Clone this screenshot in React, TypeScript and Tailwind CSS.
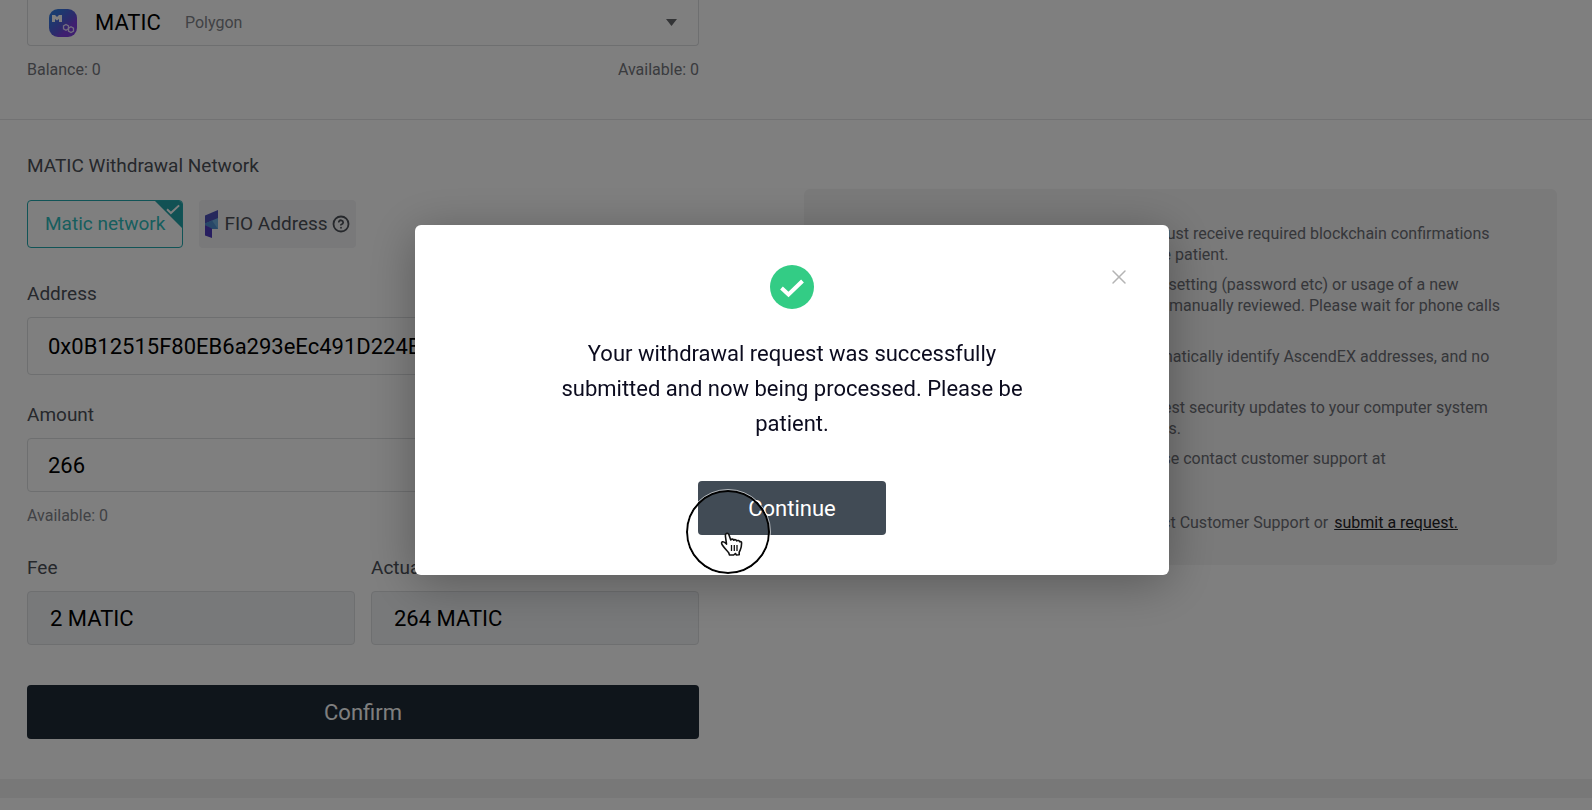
import { CircleQuestionMark, X } from "lucide-react";

const notes = [
  [
    "To be credited to your account, a withdrawal must receive required blockchain confirmations",
    "on the network. It might take time, so please be patient.",
  ],
  [
    "For security of your account any change of the setting (password etc) or usage of a new",
    "withdrawal address may cause a request to be manually reviewed. Please wait for phone calls",
    "or emails from us.",
  ],
  [
    "For all internal transfers of funds, we will automatically identify AscendEX addresses, and no",
    "network fee is charged.",
  ],
  [
    "For your safety, please always install all the latest security updates to your computer system",
    "or browser, and do not open any suspicious files.",
  ],
  [
    "If you have any other questions or issues, please contact customer support at",
    "support@ascendex.com",
  ],
];

const CoinIcon = () => (
  <svg className="size-7 shrink-0" viewBox="0 0 28 28" aria-hidden="true">
    <defs>
      <linearGradient id="coin" x1="0" y1="0" x2="1" y2="1">
        <stop offset="0.2" stopColor="#3478e0" />
        <stop offset="0.55" stopColor="#5a55d8" />
        <stop offset="0.7" stopColor="#7f3fe0" />
      </linearGradient>
    </defs>
    <rect width="28" height="28" rx="9" fill="url(#coin)" />
    <path d="M3 6h3l2 2 2-2h3v7h-3v-3l-2 1.500-2-1.500v3H3z" fill="#fff" />
    <g fill="none" stroke="#e4dcff" strokeWidth="1.300">
      <path d="M17 15.500l2.500 1.400v2.900L17 21.200l-2.500-1.400v-2.900z" />
      <path d="M22 17.800l2.500 1.400v2.900L22 23.500l-2.500-1.400v-2.900z" />
    </g>
  </svg>
);

const FioIcon = () => (
  <svg className="h-7 w-[13px] shrink-0" viewBox="0 0 13 28" aria-hidden="true">
    <path d="M0 8l13-1v12H7l-7-4z" fill="#6fb0e0" />
    <path d="M0 5.500L13 0v8L0 13.500z" fill="#4c50b8" />
    <path d="M0 13.500L7 10.500l6 8.500H7l-7-4z" fill="#4f8fd0" />
    <path d="M0 15l7 3.500V28l-7-2.500z" fill="#4f3cc0" />
  </svg>
);

const HandPointer = () => (
  <svg className="h-[25px] w-6" viewBox="0 0 24 25" aria-hidden="true">
    <path
      d="M6.500 1.500c1-.4 2 .1 2.400 1.200L10.800 8c.5-1.300 2.600-1.200 3 .2.700-.9 2.500-.7 2.900.7.900-.8 2.700-.3 3 .900.900-.5 1.900 0 1.900 1.300 0 2.500-.4 5-1.500 7.200l-.9 1.800v2.600l-2.800.3-1-1.500-1.700 1.500H9.500l-.8-2.200C7 18.500 4.700 16.600 2.500 13.300c-1.200-1.800-1.300-3 0-3.500 1.200-.4 2.700.8 4 2.300L5.400 4c-.2-1.200.2-2.100 1.100-2.500z"
      fill="#fff"
      stroke="#111"
      strokeWidth="1.600"
      strokeLinejoin="round"
    />
    <path d="M11.500 13v6M14.300 13v6M17 13v6" stroke="#111" strokeWidth="1.300" />
  </svg>
);

const WithdrawForm = () => (
  <form className="min-w-0 pt-8" onSubmit={(e) => e.preventDefault()}>
    <fieldset>
      <legend className="text-[19px] leading-7 text-[#4c5058]">
        MATIC Withdrawal Network
      </legend>
      <div className="mt-5 flex gap-4 text-[19px]">
        <label className="relative flex h-12 items-center overflow-hidden rounded-sm border border-[#22a9ae] px-[17px] text-[#2fbcbd]">
          <input type="radio" name="network" className="sr-only" defaultChecked />
          Matic network
          <svg className="absolute top-0 right-0 size-[27px]" viewBox="0 0 28 28" aria-hidden="true">
            <path d="M0 0h28v28z" fill="#22a3a8" />
            <path d="M12.500 8.500l4 4L25 4.500" fill="none" stroke="#fff" strokeWidth="2" />
          </svg>
        </label>
        <label className="flex h-12 items-center gap-1.5 rounded-sm bg-[#f3f3f4] px-1.5 text-[#4c5058]">
          <input type="radio" name="network" className="sr-only" />
          <FioIcon />
          <span className="flex items-center gap-1">
            FIO Address <CircleQuestionMark className="size-[18px]" strokeWidth={2.4} />
          </span>
        </label>
      </div>
    </fieldset>

    <label htmlFor="address" className="mt-8 block text-[19px] leading-7 text-[#4c5058]">
      Address
    </label>
    <input
      id="address"
      className="mt-[9px] h-[58px] w-full rounded-sm border border-[#dcdee0] bg-white px-5 text-[22px] text-black"
      defaultValue="0x0B12515F80EB6a293eEc491D224Bd8fA02C6aE13"
    />

    <label htmlFor="amount" className="mt-[26px] block text-[19px] leading-7 text-[#4c5058]">
      Amount
    </label>
    <input
      id="amount"
      className="mt-[9px] h-[54px] w-full rounded-sm border border-[#dcdee0] bg-white px-5 text-[22px] text-black"
      defaultValue="266"
    />
    <p className="mt-2.5 text-base leading-7 text-[#82848a]">Available: 0</p>

    <div className="mt-6 grid grid-cols-2 gap-4">
      <div>
        <label htmlFor="fee" className="block text-[19px] leading-7 text-[#4c5058]">
          Fee
        </label>
        <input
          id="fee"
          readOnly
          className="mt-[9px] h-[54px] w-full rounded-sm border border-[#dcdee0] bg-[#f0f2f5] px-[22px] text-[22px] text-black"
          defaultValue="2 MATIC"
        />
      </div>
      <div>
        <label htmlFor="actual" className="block text-[19px] leading-7 text-[#4c5058]">
          Actual
        </label>
        <input
          id="actual"
          readOnly
          className="mt-[9px] h-[54px] w-full rounded-sm border border-[#dcdee0] bg-[#f0f2f5] px-[22px] text-[22px] text-black"
          defaultValue="264 MATIC"
        />
      </div>
    </div>

    <button
      type="submit"
      className="mt-10 h-[54px] w-full rounded-sm bg-[#1e2a36] text-[22px] text-white"
    >
      Confirm
    </button>
  </form>
);

const Notes = () => (
  <aside className="mt-[69px] min-w-0 self-start rounded-md bg-[#f4f4f4] pt-[34px] pb-8 pl-8 text-base leading-[21px] whitespace-nowrap text-[#6c6e74]">
    <ul className="space-y-[9px]">
      {notes.map((lines) => (
        <li key={lines[0]}>
          {lines.map((line) => (
            <span key={line} className="block">
              {line}
            </span>
          ))}
        </li>
      ))}
    </ul>
    <p className="mt-[22px]">
      If you still need any help, you might also contact Customer Support or{" "}
      <a href="#request" className="ml-0.5 text-[#1f2226] underline">
        submit a request.
      </a>
    </p>
  </aside>
);

const SuccessDialog = () => (
  <div className="fixed inset-0 flex items-center justify-center bg-black/50 pr-2 pb-2.5">
    <div
      role="dialog"
      aria-modal="true"
      aria-labelledby="message"
      className="relative flex w-[754px] flex-col items-center rounded-md bg-white pt-10 pb-10 shadow-[0_8px_48px_rgba(0,0,0,0.3)]"
    >
      <button aria-label="Close" className="absolute top-10 right-[38px] text-[#b4b4b4]">
        <X className="size-6" strokeWidth={1.5} />
      </button>
      <svg className="size-11" viewBox="0 0 44 44" aria-hidden="true">
        <circle cx="22" cy="22" r="22" fill="#33cc85" />
        <path d="M11.500 23l7 6.500L32.500 16" fill="none" stroke="#fff" strokeWidth="4" />
      </svg>
      <p
        id="message"
        className="mt-[27px] w-[480px] text-center text-[22px] leading-[35px] text-[#0b0b1e]"
      >
        Your withdrawal request was successfully submitted and now being
        processed. Please be patient.
      </p>
      <div className="relative mt-10">
        <button className="h-[54px] w-[188px] rounded-sm bg-[#414b55] text-[22px] text-white">
          Continue
        </button>
        {/* click ring and pointer */}
        <div className="pointer-events-none absolute -left-3 top-[9px] size-[84px] rounded-full border-2 border-black outline outline-white/60">
          <div className="absolute top-10 left-8">
            <HandPointer />
          </div>
        </div>
      </div>
    </div>
  </div>
);

const App = () => {
  return (
    <div className="min-h-screen overflow-hidden bg-white font-[Roboto,sans-serif]">
      <div className="grid grid-cols-[672fr_753fr] gap-x-[105px] border-b border-[#e4e4e6] pr-[35px] pb-[35px] pl-[27px]">
        <div>
          <div className="flex h-[46px] items-center rounded-b-sm border border-t-0 border-[#dcdee0] px-[21px]">
            <CoinIcon />
            <select
              aria-label="Asset"
              className="ml-[18px] appearance-none bg-transparent text-[22px] text-black"
            >
              <option>MATIC</option>
            </select>
            <span className="ml-6 text-base text-[#82848a]">Polygon</span>
            <svg className="ml-auto h-[7px] w-[11px]" viewBox="0 0 11 7" aria-hidden="true">
              <path d="M0 0h11L5.500 7z" fill="#66686c" />
            </svg>
          </div>
          <div className="mt-2.5 flex justify-between text-base leading-7 text-[#74767c]">
            <span>Balance: 0</span>
            <span>Available: 0</span>
          </div>
        </div>
      </div>

      <div className="grid grid-cols-[672fr_753fr] gap-x-[105px] pr-[35px] pb-10 pl-[27px]">
        <WithdrawForm />
        <Notes />
      </div>
      <div className="h-[19px] bg-[#f0f0f0]" />

      <SuccessDialog />
    </div>
  );
};

export default App;
